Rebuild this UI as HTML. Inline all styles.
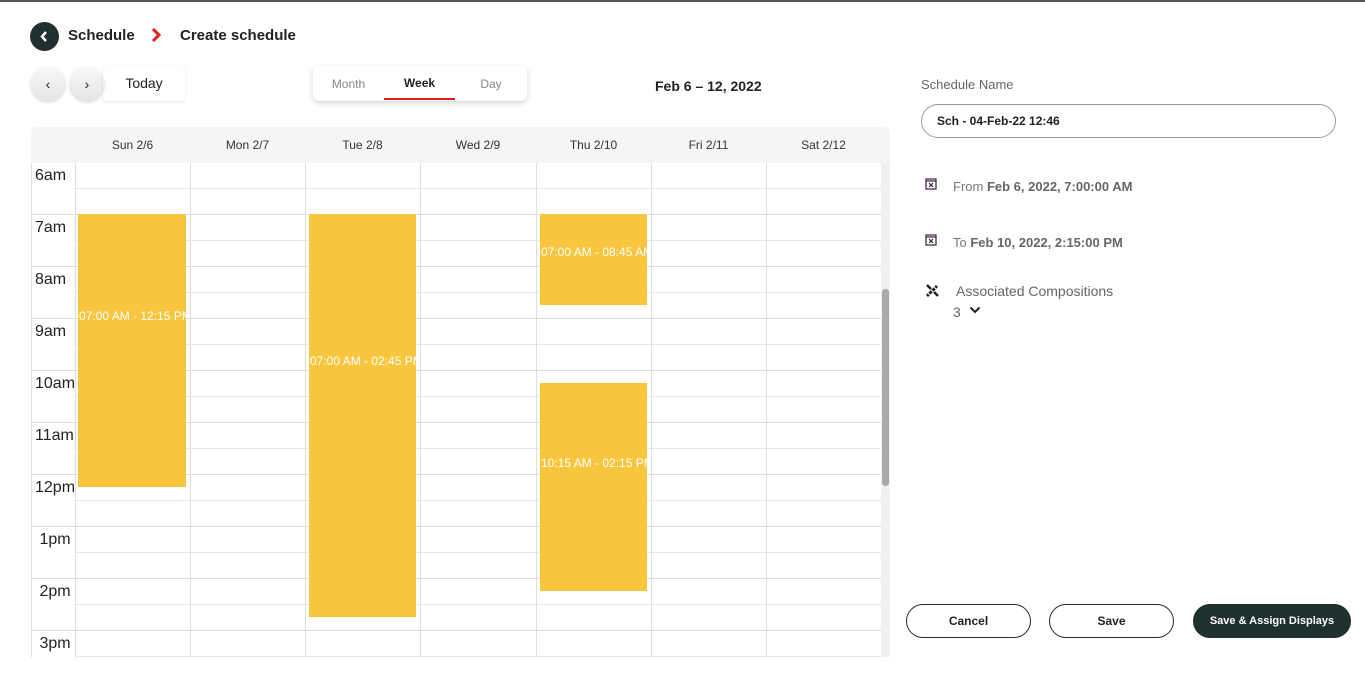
<!DOCTYPE html>
<html><head><style>
*{box-sizing:border-box;margin:0;padding:0}
body{width:1365px;height:657px;overflow:hidden;background:#fff;font-family:"Liberation Sans",sans-serif;color:#222;position:relative}
.abs{position:absolute}
.topline{left:0;top:0;width:1365px;height:2px;background:#555}
.back{left:30px;top:22px;width:29px;height:29px;border-radius:50%;background:#1f302e}
.navb{width:34px;height:34px;border-radius:50%;background:linear-gradient(#f8f8f8,#e4e4e4);box-shadow:0 1px 3px rgba(0,0,0,.2);text-align:center;line-height:34px;font-size:14px;top:67px}
.tab{top:66px;left:313px;width:214px;height:35px;border-radius:6px;box-shadow:0 2px 6px rgba(0,0,0,.18);background:#fff}
.grid{left:31px;top:163px;width:850px;height:494px;border-left:1px solid #ddd;overflow:hidden}
.ev{background:#f8c63e;color:#fff;font-size:12px;white-space:nowrap;overflow:hidden}
.ev span{position:absolute;left:1px}
.btn{top:604px;height:34px;border-radius:17px;border:1px solid #1f302e;background:#fff;font-size:12px;font-weight:bold;text-align:center;line-height:32px}
</style></head><body>
<div class="abs topline"></div>
<div class="abs back"><svg width="29" height="29" viewBox="0 0 29 29"><path d="M16 10l-4 4.5 4 4.5" stroke="#fff" stroke-width="2.5" fill="none"/></svg></div>
<div class="abs" style="left:68px;top:27px;font-size:15px;font-weight:bold;color:#222">Schedule</div>
<svg class="abs" style="left:150px;top:27px" width="12" height="16" viewBox="0 0 12 16"><path d="M3 2l6 6-6 6" stroke="#e31b1b" stroke-width="3" fill="none"/></svg>
<div class="abs" style="left:180px;top:27px;font-size:15px;font-weight:bold;color:#222">Create schedule</div>
<div class="abs navb" style="left:31px">&#8249;</div>
<div class="abs navb" style="left:70px">&#8250;</div>
<div class="abs" style="left:103px;top:66px;width:82px;height:35px;border-radius:4px;box-shadow:0 1px 3px rgba(0,0,0,.1);text-align:center;line-height:35px;font-size:14px">Today</div>
<div class="abs tab">
<div class="abs" style="left:0;width:71px;top:11px;text-align:center;font-size:12px;color:#888">Month</div>
<div class="abs" style="left:71px;width:71px;top:10px;text-align:center;font-size:12px;font-weight:bold">Week</div>
<div class="abs" style="left:71px;width:71px;top:32px;height:2px;background:#e31b1b"></div>
<div class="abs" style="left:142px;width:72px;top:11px;text-align:center;font-size:12px;color:#888">Day</div>
</div>
<div class="abs" style="left:655px;top:78px;font-size:14px;font-weight:bold">Feb 6 – 12, 2022</div>
<div class="abs" style="left:31px;top:127px;width:859px;height:36px;background:#f5f5f5;border-radius:6px 6px 0 0;font-size:12px;color:#333">
<span class="abs" style="left:44px;width:115px;top:11px;text-align:center">Sun 2/6</span>
<span class="abs" style="left:159px;width:115px;top:11px;text-align:center">Mon 2/7</span>
<span class="abs" style="left:274px;width:115px;top:11px;text-align:center">Tue 2/8</span>
<span class="abs" style="left:389px;width:116px;top:11px;text-align:center">Wed 2/9</span>
<span class="abs" style="left:505px;width:115px;top:11px;text-align:center">Thu 2/10</span>
<span class="abs" style="left:620px;width:115px;top:11px;text-align:center">Fri 2/11</span>
<span class="abs" style="left:735px;width:115px;top:11px;text-align:center">Sat 2/12</span>
</div>
<div class="abs grid">
<div class="abs" style="left:0;top:0;width:850px;height:494px;background:
repeating-linear-gradient(to bottom,transparent 0 51px,#ddd 51px 52px)"></div>
<div class="abs" style="left:44px;top:0;width:806px;height:494px;background:
repeating-linear-gradient(to bottom,transparent 0 25px,#e8e8e8 25px 26px,transparent 26px 52px)"></div>
<div class="abs" style="left:0;top:0;width:850px;height:494px;background:
linear-gradient(to right,transparent 43px,#ddd 43px 44px,transparent 44px 158px,#ddd 158px 159px,transparent 159px 273px,#ddd 273px 274px,transparent 274px 388px,#ddd 388px 389px,transparent 389px 504px,#ddd 504px 505px,transparent 505px 619px,#ddd 619px 620px,transparent 620px 734px,#ddd 734px 735px,transparent 735px)"></div>
</div>
<div class="abs" style="left:881px;top:163px;width:9px;height:494px;background:#f1f1f1"></div>
<div class="abs" style="left:882px;top:289px;width:7px;height:197px;background:#aaa;border-radius:3px"></div>
<div class="abs" style="left:35px;top:166px;font-size:16px;line-height:20px">
<div style="height:52px">6am</div><div style="height:52px">7am</div><div style="height:52px">8am</div><div style="height:52px">9am</div><div style="height:52px">10am</div><div style="height:52px">11am</div><div style="height:52px">12pm</div><div style="height:52px">&nbsp;1pm</div><div style="height:52px">&nbsp;2pm</div><div style="height:52px">&nbsp;3pm</div>
</div>
<div class="abs ev" style="left:78px;top:214px;width:108px;height:273px"><span style="top:95px">07:00 AM - 12:15 PM</span></div>
<div class="abs ev" style="left:309px;top:214px;width:107px;height:403px"><span style="top:140px">07:00 AM - 02:45 PM</span></div>
<div class="abs ev" style="left:540px;top:214px;width:107px;height:91px"><span style="top:31px">07:00 AM - 08:45 AM</span></div>
<div class="abs ev" style="left:540px;top:383px;width:107px;height:208px"><span style="top:73px">10:15 AM - 02:15 PM</span></div>
<div class="abs" style="left:921px;top:77px;font-size:13px;color:#666">Schedule Name</div>
<div class="abs" style="left:921px;top:104px;width:415px;height:34px;border:1px solid #999;border-radius:17px;font-size:12px;font-weight:bold;line-height:32px;padding-left:15px;color:#222">Sch - 04-Feb-22 12:46</div>
<svg class="abs" style="left:925px;top:177px" width="12" height="13" viewBox="0 0 12 13"><rect x="1" y="2" width="10" height="10" fill="none" stroke="#4a2c4a" stroke-width="1.3"/><line x1="1" y1="4" x2="11" y2="4" stroke="#4a2c4a" stroke-width="1.3"/><path d="M4 6l4 4M8 6l-4 4" stroke="#222" stroke-width="1.1"/></svg>
<div class="abs" style="left:953px;top:179px;font-size:13px;color:#777">From <b style="color:#666">Feb 6, 2022, 7:00:00 AM</b></div>
<svg class="abs" style="left:925px;top:233px" width="12" height="13" viewBox="0 0 12 13"><rect x="1" y="2" width="10" height="10" fill="none" stroke="#4a2c4a" stroke-width="1.3"/><line x1="1" y1="4" x2="11" y2="4" stroke="#4a2c4a" stroke-width="1.3"/><path d="M4 6l4 4M8 6l-4 4" stroke="#222" stroke-width="1.1"/></svg>
<div class="abs" style="left:953px;top:235px;font-size:13px;color:#777">To <b style="color:#666">Feb 10, 2022, 2:15:00 PM</b></div>
<svg class="abs" style="left:925px;top:283px" width="15" height="15" viewBox="0 0 15 15"><path d="M2 13L12 3" stroke="#222" stroke-width="3"/><path d="M3 10l2 2M6 7l2 2M9 4l2 2" stroke="#fff" stroke-width="1"/><path d="M2 2l4 4M9 9l4 4" stroke="#222" stroke-width="2.5"/></svg>
<div class="abs" style="left:956px;top:283px;font-size:14px;color:#666">Associated Compositions</div>
<div class="abs" style="left:953px;top:304px;font-size:14px;color:#666">3</div>
<svg class="abs" style="left:969px;top:306px" width="12" height="8" viewBox="0 0 12 8"><path d="M1.5 1.5l4.5 4.5 4.5-4.5" stroke="#222" stroke-width="2" fill="none"/></svg>
<div class="abs btn" style="left:906px;width:125px">Cancel</div>
<div class="abs btn" style="left:1049px;width:125px">Save</div>
<div class="abs btn" style="left:1193px;width:158px;background:#1f302e;color:#fff;font-size:11px">Save &amp; Assign Displays</div>
</body></html>
